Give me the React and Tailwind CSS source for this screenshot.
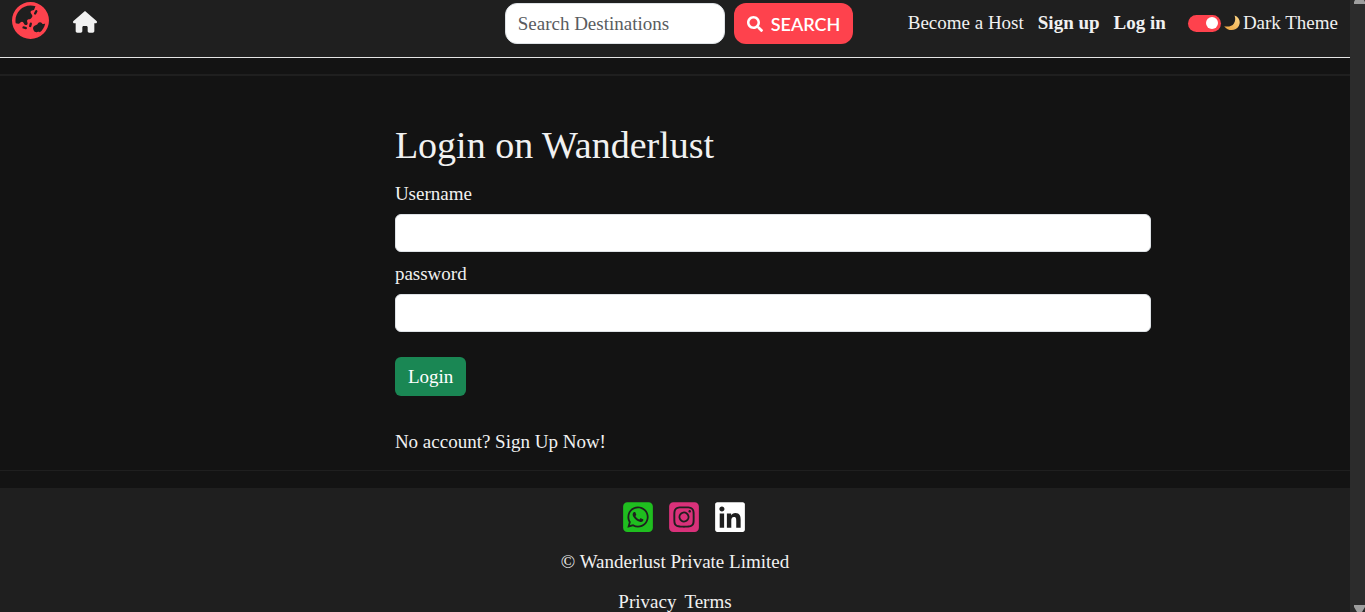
import { useState } from "react";
import { FaEarthAsia, FaHouse, FaSquareWhatsapp, FaSquareInstagram, FaLinkedin } from "react-icons/fa6";
import { FaSearch } from "react-icons/fa";

function Moon() {
  return (
    <svg viewBox="0 0 16 16" className="size-4" aria-hidden="true">
      <defs>
        <linearGradient id="moon" x1="1" y1="0" x2="0" y2="1">
          <stop offset="0" stopColor="#ffd98a" />
          <stop offset="1" stopColor="#e9a13b" />
        </linearGradient>
      </defs>
      <path d="M10.5 .4C15.300 1.900 17 7 14.800 11C12.200 15.800 4.500 17 .2 11.200C4 12.200 8 11.400 9.900 8.500C11.500 6 11.600 3.200 10.500 .4Z" fill="url(#moon)" />
    </svg>
  );
}

function Header() {
  const [dark, setDark] = useState(true);
  return (
    <header className="flex h-[58px] shrink-0 items-start justify-between border-b border-[#e4e4e4] bg-[#1f1f1f] px-3">
      <nav className="flex flex-1 items-center gap-6 pt-0.5" aria-label="Main">
        <a href="#home" aria-label="Wanderlust"><FaEarthAsia className="size-[37px] text-[#fe424d]" /></a>
        <a href="#listings" aria-label="Home" className="pt-0.5"><FaHouse className="size-6" /></a>
      </nav>
      <form className="ml-2 flex gap-[9px] pt-[3px]" onSubmit={(e) => e.preventDefault()}>
        <input type="search" aria-label="Search Destinations" placeholder="Search Destinations" className="h-[41px] w-[220px] rounded-xl border border-[#dee2e6] bg-white px-3 text-[#212529] placeholder:text-[#595c5f]" />
        <button className="flex h-[41px] items-center gap-2 rounded-xl bg-[#fe424d] px-[13px] font-['Lato',sans-serif] text-lg font-semibold text-white">
          <FaSearch className="size-4" />SEARCH
        </button>
      </form>
      <div className="flex flex-1 items-center justify-end gap-3.5 whitespace-nowrap pt-[11px]">
        <a href="#host">Become a Host</a>
        <a href="#signup" className="font-bold">Sign up</a>
        <a href="#login" className="font-bold">Log in</a>
        <label className="ml-2 flex items-center gap-[3px]">
          <input type="checkbox" checked={dark} onChange={() => setDark(!dark)} className="peer sr-only" />
          <span className="flex h-[17px] w-[33px] items-center rounded-full bg-[#fe424d] px-[3px] peer-checked:justify-end">
            <span className="size-3 rounded-full bg-white" />
          </span>
          <Moon />Dark Theme
        </label>
      </div>
    </header>
  );
}

function Field({ id, label, type }) {
  return (
    <div className="flex flex-col gap-2">
      <label htmlFor={id}>{label}</label>
      <input id={id} type={type} className="h-[38px] w-full rounded-md border border-[#dee2e6] bg-white px-3 text-[#212529]" />
    </div>
  );
}

function Footer() {
  return (
    <footer className="flex flex-1 shrink-0 flex-col items-center gap-4 bg-[#1f1f1f] pt-3">
      <div className="flex gap-3 pl-[18px]">
        <a href="#whatsapp" aria-label="WhatsApp"><FaSquareWhatsapp className="size-[34px] text-[#1fbe1f]" /></a>
        <a href="#instagram" aria-label="Instagram"><FaSquareInstagram className="size-[34px] text-[#d9317a]" /></a>
        <a href="#linkedin" aria-label="LinkedIn"><FaLinkedin className="size-[34px] text-white" /></a>
      </div>
      <p>© Wanderlust Private Limited</p>
      <div className="flex gap-2">
        <a href="#privacy">Privacy</a>
        <a href="#terms">Terms</a>
      </div>
    </footer>
  );
}

export default function App() {
  return (
    <div className="flex h-screen overflow-hidden bg-[#131313] font-['Liberation_Serif',serif] text-[19px] leading-6 text-[#f1f1f1]">
      <div className="flex min-w-0 flex-1 flex-col">
        <Header />
        <hr className="mt-4 shrink-0 border-t-2 border-[#1f1f1f]" />
        <main className="shrink-0 pb-4 pt-12">
          <form className="ml-[29.25%] flex w-[56%] flex-col items-start" onSubmit={(e) => e.preventDefault()}>
            <h1 className="mb-4 text-[38px] leading-[42px]">Login on Wanderlust</h1>
            <div className="flex w-full flex-col gap-2.5">
              <Field id="username" label="Username" type="text" />
              <Field id="password" label="password" type="password" />
            </div>
            <button className="mt-[25px] h-[39px] rounded-md bg-[#1a8754] px-[13px] text-white">Login</button>
            <p className="mt-[34px]">No account? <a href="#signup">Sign Up Now!</a></p>
          </form>
        </main>
        <hr className="mb-[17px] shrink-0 border-[#1f1f1f]" />
        <Footer />
      </div>
      <div className="flex w-[15px] shrink-0 flex-col items-center justify-between bg-[#2c2c2c] pl-1" aria-hidden="true">
        <svg viewBox="0 0 11 4" className="h-1 w-[11px]"><path d="M1 0H10L11 2V4H0V2Z" fill="#9f9f9f" /></svg>
        <svg viewBox="0 0 11 7" className="h-[7px] w-[11px]"><path d="M0 0H11V2L8 7H3L0 2Z" fill="#9f9f9f" /></svg>
      </div>
    </div>
  );
}
